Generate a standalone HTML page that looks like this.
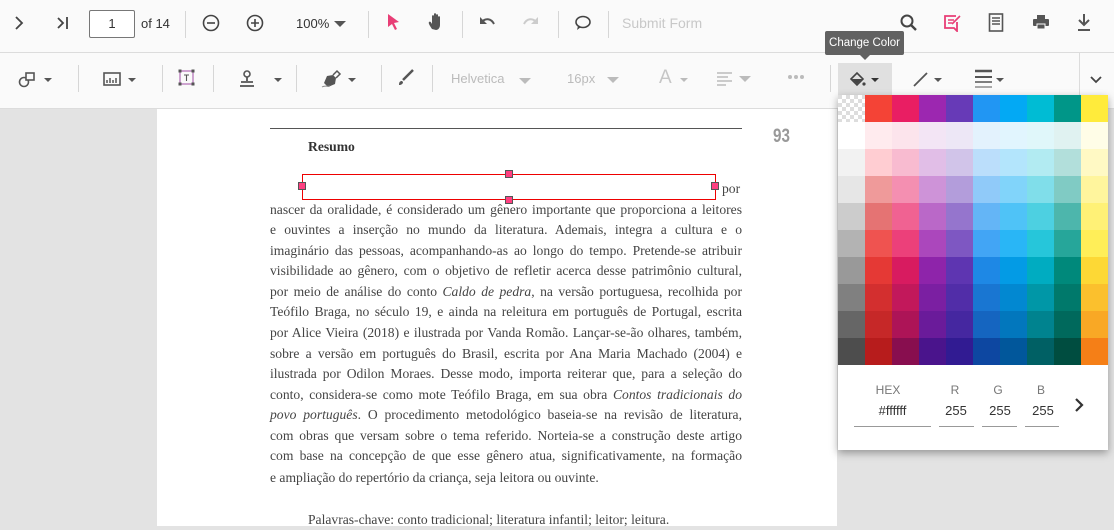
<!DOCTYPE html>
<html><head><meta charset="utf-8"><style>
*{margin:0;padding:0;box-sizing:border-box}
body{width:1114px;height:526px;overflow:hidden;background:#e3e3e3;font-family:"Liberation Sans",sans-serif;position:relative}
.abs{position:absolute}
#tb1{left:0;top:0;width:1114px;height:53px;background:#fafafa;border-bottom:1px solid #dcdcdc}
#tb2{left:0;top:53px;width:1114px;height:56px;background:#fafafa;border-bottom:1px solid #dcdcdc}
.sep{position:absolute;width:1px;background:#d6d6d6}
.dd{position:absolute;width:0;height:0;border-left:4px solid transparent;border-right:4px solid transparent;border-top:4px solid #555}
.ddl{border-top-color:#bbb}
#page{left:157px;top:109px;width:680px;height:417px;background:#fff}
.ln{position:absolute;left:270px;width:472px;font-family:"Liberation Serif",serif;font-size:13.6px;color:#444;text-align:justify;text-align-last:justify;white-space:nowrap;height:20px;line-height:20px}
.ln.l{text-align-last:left}
#pal{left:838px;top:95px;width:270px;height:355px;background:#fff;box-shadow:0 3px 8px rgba(0,0,0,.35)}
.cell{position:absolute;width:27px;height:27px}
.lbl{position:absolute;font-size:12px;color:#777;text-align:center}
.val{position:absolute;font-size:13px;color:#333;text-align:center}
.ul{position:absolute;height:1px;background:#999;top:426px}
.h{position:absolute;width:8px;height:8px;background:#ff4081;border:1px solid #555}
</style></head><body>
<div id="tb1" class="abs"></div>
<div id="tb2" class="abs"></div>
<!-- row 1 -->
<svg class="abs" style="left:13px;top:15px" width="14" height="16"><path d="M3 2l6 6-6 6" stroke="#444" stroke-width="1.8" fill="none"/></svg>
<svg class="abs" style="left:55px;top:15px" width="16" height="16"><path d="M3 3l5 5-5 5" stroke="#444" stroke-width="1.8" fill="none"/><path d="M12 2v12" stroke="#444" stroke-width="1.8"/></svg>
<div class="abs" style="left:89px;top:10px;width:46px;height:28px;border:1px solid #777;border-radius:2px;font-size:13px;text-align:center;line-height:26px;color:#333;background:#fff">1</div>
<div class="abs" style="left:141px;top:16px;font-size:13px;color:#333">of 14</div>
<div class="sep" style="left:185px;top:11px;height:27px"></div>
<svg class="abs" style="left:201px;top:13px" width="20" height="20"><circle cx="10" cy="10" r="7.5" stroke="#444" stroke-width="1.6" fill="none"/><path d="M6 10h8" stroke="#444" stroke-width="1.6"/></svg>
<svg class="abs" style="left:245px;top:13px" width="20" height="20"><circle cx="10" cy="10" r="7.5" stroke="#444" stroke-width="1.6" fill="none"/><path d="M6 10h8M10 6v8" stroke="#444" stroke-width="1.6"/></svg>
<div class="abs" style="left:296px;top:16px;font-size:13px;color:#333">100%</div>
<div class="dd" style="left:334px;top:21px;border-left-width:6px;border-right-width:6px;border-top-width:6px"></div>
<div class="sep" style="left:368px;top:11px;height:27px"></div>
<svg class="abs" style="left:386px;top:13px" width="16" height="18"><path d="M2 1l11 8-5 1 3 6-2 1-3-6-4 3z" fill="#e83e76"/></svg>
<svg class="abs" style="left:427px;top:12px" width="20" height="20"><path d="M5 17c-2-3-4-6-3-7 1-1 2 0 3 2V4c0-1 2-1 2 0v5V2c0-1 2-1 2 0v7V3c0-1 2-1 2 0v6V5c0-1 2-1 2 0v8c0 3-2 5-4 5z" fill="#555"/></svg>
<div class="sep" style="left:462px;top:11px;height:27px"></div>
<svg class="abs" style="left:478px;top:14px" width="18" height="16"><path d="M4 8c3-4 9-4 12 2" stroke="#555" stroke-width="2" fill="none"/><path d="M2 3v7h7z" fill="#555"/></svg>
<svg class="abs" style="left:522px;top:14px" width="18" height="16"><path d="M14 8c-3-4-9-4-12 2" stroke="#ccc" stroke-width="2" fill="none"/><path d="M16 3v7H9z" fill="#ccc"/></svg>
<div class="sep" style="left:558px;top:11px;height:27px"></div>
<svg class="abs" style="left:574px;top:14px" width="18" height="18"><ellipse cx="9" cy="8" rx="7" ry="5.5" stroke="#444" stroke-width="1.6" fill="none"/><path d="M4 12l-1 4 4-3" fill="#444"/></svg>
<div class="sep" style="left:608px;top:11px;height:27px"></div>
<div class="abs" style="left:622px;top:15px;font-size:14px;color:#c8c8c8">Submit Form</div>
<svg class="abs" style="left:899px;top:13px" width="20" height="20"><circle cx="8" cy="8" r="5.5" stroke="#444" stroke-width="2" fill="none"/><path d="M12 12l5 5" stroke="#444" stroke-width="2.4"/></svg>
<svg class="abs" style="left:943px;top:12px" width="20" height="20"><path d="M13 4H2v12h9l3 3V10" stroke="#e83e76" stroke-width="1.8" fill="none"/><path d="M5 8h6M5 11h4M9 12l8-8" stroke="#e83e76" stroke-width="1.6"/></svg>
<svg class="abs" style="left:988px;top:13px" width="16" height="20"><rect x="1.5" y="1" width="13" height="17" stroke="#555" stroke-width="1.6" fill="none"/><path d="M4 5h8M4 8h8M4 11h8" stroke="#555" stroke-width="1.5"/></svg>
<svg class="abs" style="left:1032px;top:14px" width="18" height="16"><rect x="5" y="1" width="8" height="4" fill="#555"/><rect x="1" y="5" width="16" height="7" rx="1" fill="#555"/><rect x="5" y="10" width="8" height="5" fill="#555" stroke="#fafafa" stroke-width="1"/></svg>
<svg class="abs" style="left:1076px;top:13px" width="16" height="20"><path d="M8 1v11M3 7l5 5 5-5" stroke="#555" stroke-width="2" fill="none"/><path d="M2 17h12" stroke="#555" stroke-width="2"/></svg>
<!-- row 2 -->
<svg class="abs" style="left:18px;top:70px" width="20" height="20"><circle cx="6" cy="12" r="4.5" stroke="#555" stroke-width="1.6" fill="none"/><rect x="8" y="3" width="8" height="7" stroke="#555" stroke-width="1.6" fill="#fafafa"/></svg>
<div class="dd" style="left:44px;top:78px"></div>
<div class="sep" style="left:78px;top:65px;height:27px"></div>
<svg class="abs" style="left:103px;top:72px" width="18" height="14"><rect x="1" y="1" width="16" height="12" stroke="#555" stroke-width="1.6" fill="none"/><path d="M4 11V8M7 11V6M10 11V8M13 11V6" stroke="#555" stroke-width="1.5"/></svg>
<div class="dd" style="left:128px;top:78px"></div>
<div class="sep" style="left:162px;top:65px;height:27px"></div>
<svg class="abs" style="left:177px;top:68px" width="20" height="20"><rect x="3" y="3" width="13" height="13" stroke="#b06ab3" stroke-width="1.2" fill="none"/><rect x="1.5" y="1.5" width="3" height="3" fill="#555"/><rect x="14.5" y="1.5" width="3" height="3" fill="#555"/><rect x="1.5" y="14.5" width="3" height="3" fill="#555"/><rect x="14.5" y="14.5" width="3" height="3" fill="#555"/><path d="M7 7h5M9.5 7v6" stroke="#555" stroke-width="1.1"/></svg>
<div class="sep" style="left:213px;top:65px;height:27px"></div>
<svg class="abs" style="left:237px;top:69px" width="20" height="20"><circle cx="10" cy="5" r="3" stroke="#555" stroke-width="1.6" fill="none"/><path d="M10 8v4M4 13h12" stroke="#555" stroke-width="1.8"/><path d="M3 17h14" stroke="#555" stroke-width="1.8"/></svg>
<div class="dd" style="left:274px;top:78px"></div>
<div class="sep" style="left:296px;top:65px;height:27px"></div>
<svg class="abs" style="left:320px;top:69px" width="22" height="20"><path d="M4 14l3-7 6-1 3 3-1 6-7 3z" fill="#555"/><path d="M13 6l4-4 3 3-4 4" stroke="#555" stroke-width="1.5" fill="none"/><path d="M2 18c3-2 5 0 8-1" stroke="#888" stroke-width="1" fill="none"/></svg>
<div class="dd" style="left:348px;top:78px"></div>
<div class="sep" style="left:381px;top:65px;height:27px"></div>
<svg class="abs" style="left:397px;top:68px" width="18" height="18"><path d="M6 12l10-10" stroke="#555" stroke-width="2.5"/><path d="M2 17c0-3 1-4 3-4l1 1c0 2-2 3-4 3z" fill="#555"/></svg>
<div class="sep" style="left:432px;top:65px;height:27px"></div>
<div class="abs" style="left:451px;top:71px;font-size:13px;color:#bbb">Helvetica</div>
<div class="dd ddl" style="left:519px;top:78px;border-left-width:6px;border-right-width:6px;border-top-width:6px"></div>
<div class="abs" style="left:567px;top:71px;font-size:13px;color:#bbb">16px</div>
<div class="dd ddl" style="left:607px;top:77px;border-left-width:6px;border-right-width:6px;border-top-width:6px"></div>
<div class="abs" style="left:659px;top:67px;font-size:19px;color:#c6c6c6">A</div>
<div class="dd ddl" style="left:680px;top:78px"></div>
<svg class="abs" style="left:716px;top:71px" width="18" height="16"><path d="M1 2h15M1 6h11M1 10h15M1 14h9" stroke="#bbb" stroke-width="1.6"/></svg>
<div class="dd ddl" style="left:739px;top:76px;border-left-width:6px;border-right-width:6px;border-top-width:6px"></div>
<svg class="abs" style="left:787px;top:74px" width="18" height="6"><circle cx="3" cy="3" r="2" fill="#bbb"/><circle cx="9" cy="3" r="2" fill="#bbb"/><circle cx="15" cy="3" r="2" fill="#bbb"/></svg>
<div class="sep" style="left:830px;top:65px;height:27px"></div>
<div class="abs" style="left:838px;top:63px;width:54px;height:32px;background:#e0e0e0"></div>
<svg class="abs" style="left:848px;top:70px" width="20" height="18"><path d="M3 9l6-6 6 6-6 6z" stroke="#444" stroke-width="1.6" fill="none"/><path d="M4 9h10l-5 5z" fill="#444"/><circle cx="16" cy="14" r="1.6" fill="#444"/></svg>
<div class="dd" style="left:871px;top:78px;border-left-width:4.5px;border-right-width:4.5px;border-top-width:4.5px;border-top-color:#333"></div>
<svg class="abs" style="left:911px;top:70px" width="20" height="18"><path d="M3 16L16 3" stroke="#555" stroke-width="1.8"/></svg>
<div class="dd" style="left:934px;top:78px"></div>
<svg class="abs" style="left:974px;top:68px" width="20" height="22"><path d="M1 3h17" stroke="#555" stroke-width="2.4"/><path d="M1 9h17" stroke="#555" stroke-width="2"/><path d="M1 14h17" stroke="#555" stroke-width="1.4"/><path d="M1 19h17" stroke="#555" stroke-width="1"/></svg>
<div class="dd" style="left:996px;top:78px"></div>
<div class="sep" style="left:1079px;top:53px;height:56px;background:#dcdcdc"></div>
<svg class="abs" style="left:1089px;top:75px" width="14" height="10"><path d="M2 2l5 5 5-5" stroke="#444" stroke-width="1.8" fill="none"/></svg>
<!-- tooltip -->
<div class="abs" style="left:825px;top:31px;width:79px;height:24px;background:#616161;border-radius:2px;color:#fff;font-size:11.5px;line-height:24px;text-align:center">Change Color</div>
<div class="abs" style="left:860px;top:55px;width:0;height:0;border-left:5px solid transparent;border-right:5px solid transparent;border-top:5px solid #616161"></div>
<!-- page -->
<div id="page" class="abs"></div>
<div class="abs" style="left:270px;top:128px;width:472px;height:1px;background:#555"></div>
<div class="abs" style="left:773px;top:126px;font-family:'Liberation Sans',sans-serif;font-weight:bold;font-size:19px;color:#999;transform:scaleX(.8);transform-origin:left">93</div>
<div class="abs" style="left:308px;top:139px;font-family:'Liberation Serif',serif;font-weight:bold;font-size:13.6px;color:#333">Resumo</div>
<div class="abs" style="left:302px;top:174px;width:414px;height:26px;border:1px solid #e00"></div>
<div class="h" style="left:505px;top:170px"></div><div class="h" style="left:505px;top:196px"></div>
<div class="h" style="left:298px;top:182px"></div><div class="h" style="left:711px;top:182px"></div>
<div class="ln l" style="top:179px;left:722px;width:30px">por</div>
<div class="ln" style="top:200px">nascer da oralidade, é considerado um gênero importante que proporciona a leitores</div>
<div class="ln" style="top:220px">e ouvintes a inserção no mundo da literatura. Ademais, integra a cultura e o</div>
<div class="ln" style="top:241px">imaginário das pessoas, acompanhando-as ao longo do tempo. Pretende-se atribuir</div>
<div class="ln" style="top:261px">visibilidade ao gênero, com o objetivo de refletir acerca desse patrimônio cultural,</div>
<div class="ln" style="top:282px">por meio de análise do conto <i>Caldo de pedra</i>, na versão portuguesa, recolhida por</div>
<div class="ln" style="top:302px">Teófilo Braga, no século 19, e ainda na releitura em português de Portugal, escrita</div>
<div class="ln" style="top:323px">por Alice Vieira (2018) e ilustrada por Vanda Romão. Lançar-se-ão olhares, também,</div>
<div class="ln" style="top:344px">sobre a versão em português do Brasil, escrita por Ana Maria Machado (2004) e</div>
<div class="ln" style="top:364px">ilustrada por Odilon Moraes. Desse modo, importa reiterar que, para a seleção do</div>
<div class="ln" style="top:385px">conto, considera-se como mote Teófilo Braga, em sua obra <i>Contos tradicionais do</i></div>
<div class="ln" style="top:405px"><i>povo português</i>. O procedimento metodológico baseia-se na revisão de literatura,</div>
<div class="ln" style="top:426px">com obras que versam sobre o tema referido. Norteia-se a construção deste artigo</div>
<div class="ln" style="top:446px">com base na concepção de que esse gênero atua, significativamente, na formação</div>
<div class="ln l" style="top:468px">e ampliação do repertório da criança, seja leitora ou ouvinte.</div>
<div class="ln l" style="top:510px;left:308px">Palavras-chave: conto tradicional; literatura infantil; leitor; leitura.</div>
<!-- palette -->
<div id="pal" class="abs"></div>
<div id="cells"></div>
<svg class="abs" style="left:838px;top:95px" width="27" height="27"><defs><pattern id="ck" width="8" height="8" patternUnits="userSpaceOnUse"><rect width="8" height="8" fill="#fff"/><rect width="4" height="4" fill="#ddd"/><rect x="4" y="4" width="4" height="4" fill="#ddd"/></pattern></defs><rect width="27" height="27" fill="url(#ck)"/></svg>
<div class="lbl" style="left:868px;top:383px;width:40px">HEX</div>
<div class="lbl" style="left:945px;top:383px;width:20px">R</div>
<div class="lbl" style="left:988px;top:383px;width:20px">G</div>
<div class="lbl" style="left:1031px;top:383px;width:20px">B</div>
<div class="val" style="left:854px;top:403px;width:77px">#ffffff</div>
<div class="val" style="left:938px;top:403px;width:36px">255</div>
<div class="val" style="left:982px;top:403px;width:36px">255</div>
<div class="val" style="left:1025px;top:403px;width:36px">255</div>
<div class="ul" style="left:854px;width:77px"></div>
<div class="ul" style="left:939px;width:35px"></div>
<div class="ul" style="left:982px;width:35px"></div>
<div class="ul" style="left:1025px;width:34px"></div>
<svg class="abs" style="left:1073px;top:397px" width="12" height="16"><path d="M3 2l6 6-6 6" stroke="#333" stroke-width="2.2" fill="none"/></svg>
<script>
var cols=[
["transparent","#ffffff","#f2f2f2","#e6e6e6","#cccccc","#b3b3b3","#999999","#808080","#666666","#4d4d4d"],
["#f44336","#ffebee","#ffcdd2","#ef9a9a","#e57373","#ef5350","#e53935","#d32f2f","#c62828","#b71c1c"],
["#e91e63","#fce4ec","#f8bbd0","#f48fb1","#f06292","#ec407a","#d81b60","#c2185b","#ad1457","#880e4f"],
["#9c27b0","#f3e5f5","#e1bee7","#ce93d8","#ba68c8","#ab47bc","#8e24aa","#7b1fa2","#6a1b9a","#4a148c"],
["#673ab7","#ede7f6","#d1c4e9","#b39ddb","#9575cd","#7e57c2","#5e35b1","#512da8","#4527a0","#311b92"],
["#2196f3","#e3f2fd","#bbdefb","#90caf9","#64b5f6","#42a5f5","#1e88e5","#1976d2","#1565c0","#0d47a1"],
["#03a9f4","#e1f5fe","#b3e5fc","#81d4fa","#4fc3f7","#29b6f6","#039be5","#0288d1","#0277bd","#01579b"],
["#00bcd4","#e0f7fa","#b2ebf2","#80deea","#4dd0e1","#26c6da","#00acc1","#0097a7","#00838f","#006064"],
["#009688","#e0f2f1","#b2dfdb","#80cbc4","#4db6ac","#26a69a","#00897b","#00796b","#00695c","#004d40"],
["#ffeb3b","#fffde7","#fff9c4","#fff59d","#fff176","#ffee58","#fdd835","#fbc02d","#f9a825","#f57f17"]];
var h="";for(var c=0;c<10;c++)for(var r=0;r<10;r++){if(c==0&&r==0)continue;h+='<div class="cell" style="left:'+(838+c*27)+'px;top:'+(95+r*27)+'px;background:'+cols[c][r]+'"></div>';}
document.getElementById("cells").innerHTML=h;
</script>
</body></html>
